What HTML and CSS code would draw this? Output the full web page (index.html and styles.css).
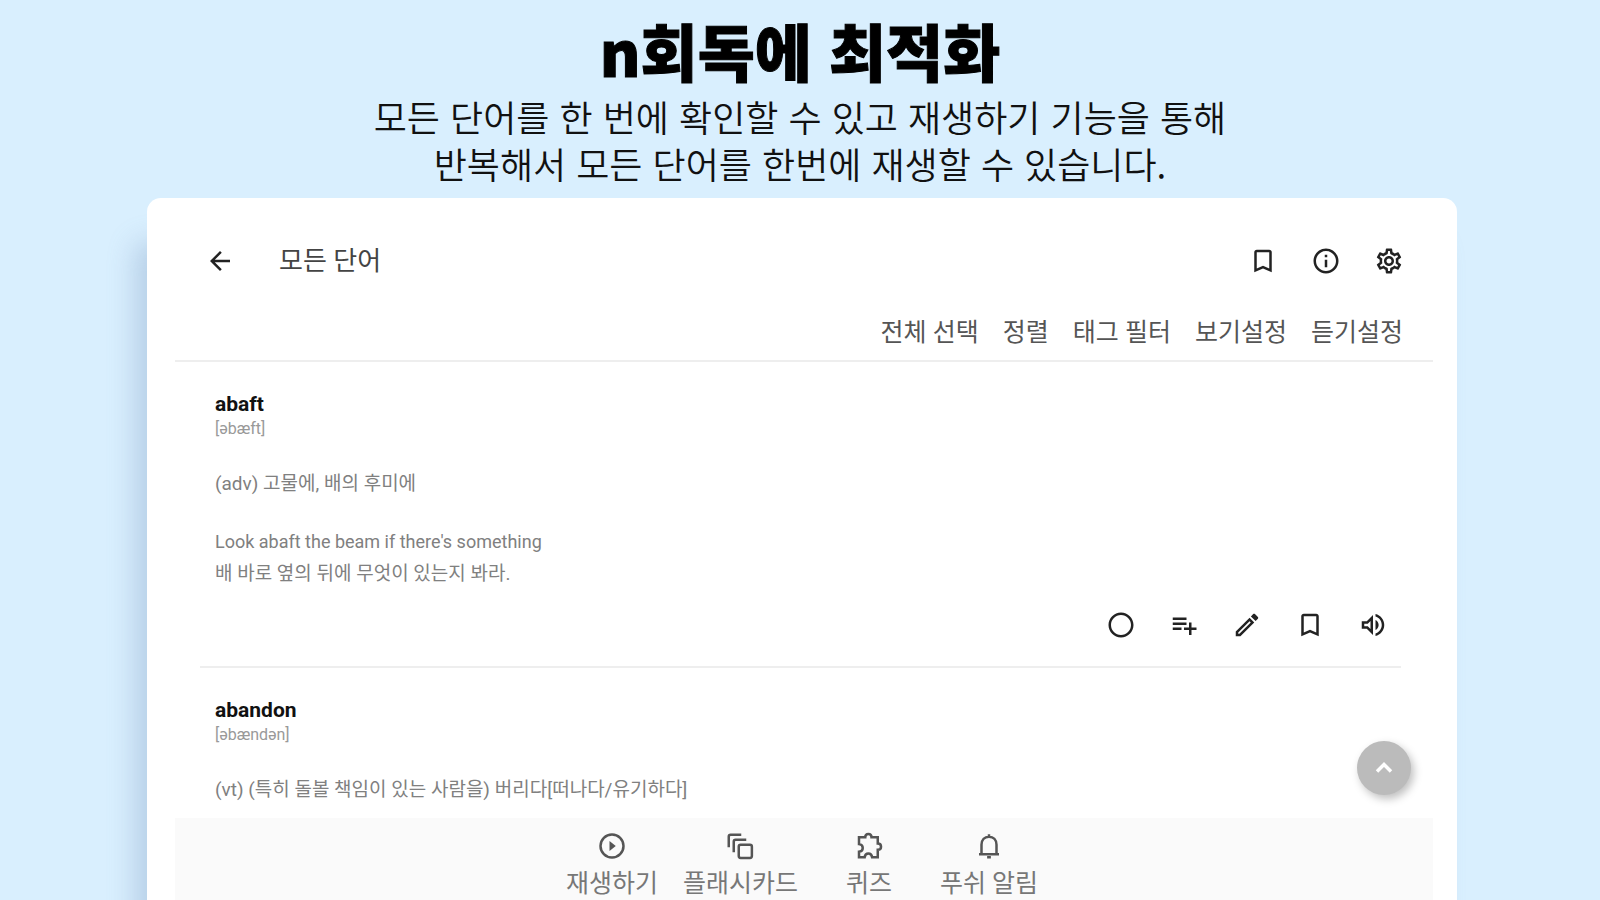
FILE: index.html
```html
<!DOCTYPE html>
<html lang="ko">
<head>
<meta charset="utf-8">
<meta name="viewport" content="width=device-width, initial-scale=1">
<title>n회독에 최적화</title>
<link rel="stylesheet" href="styles.css">
</head>
<body>
<svg class="sprite" aria-hidden="true">
  <symbol id="bookmark" viewBox="0 0 24 24"><path d="M17 3H7c-1.100 0-2 .9-2 2v16l7-3 7 3V5c0-1.100-.9-2-2-2zm0 15-5-2.180L7 18V5h10v13z"/></symbol>
</svg>
<header class="hero">
  <h1 class="hero-title">n회독에 최적화</h1>
  <p class="hero-text">모든 단어를 한 번에 확인할 수 있고 재생하기 기능을 통해<br>반복해서 모든 단어를 한번에 재생할 수 있습니다.</p>
</header>
<main class="card">
  <div class="appbar">
    <button class="icon-btn" aria-label="뒤로"><svg viewBox="0 0 24 24"><path d="M20 11H7.830l5.590-5.590L12 4l-8 8 8 8 1.410-1.410L7.830 13H20v-2z"/></svg></button>
    <h2 class="appbar-title">모든 단어</h2>
    <div class="icons">
      <button class="icon-btn" aria-label="북마크"><svg viewBox="0 0 24 24"><use href="#bookmark"/></svg></button>
      <button class="icon-btn" aria-label="정보"><svg viewBox="0 0 24 24"><path d="M11 7h2v2h-2zm0 4h2v6h-2zm1-9C6.480 2 2 6.480 2 12s4.480 10 10 10 10-4.480 10-10S17.520 2 12 2zm0 18c-4.410 0-8-3.590-8-8s3.590-8 8-8 8 3.590 8 8-3.590 8-8 8z"/></svg></button>
      <button class="icon-btn" aria-label="설정"><svg viewBox="0 0 24 24"><path d="M19.430 12.980c.04-.32.07-.64.07-.98s-.03-.66-.07-.98l2.110-1.650c.19-.15.24-.42.12-.64l-2-3.460c-.12-.22-.39-.3-.61-.22l-2.490 1c-.52-.4-1.080-.73-1.690-.98l-.38-2.650C14.460 2.180 14.250 2 14 2h-4c-.25 0-.46.18-.49.42l-.38 2.650c-.61.25-1.170.59-1.690.98l-2.490-1c-.23-.09-.49 0-.61.22l-2 3.460c-.13.22-.07.49.12.64l2.110 1.650c-.04.32-.07.65-.07.98s.03.66.07.98l-2.110 1.650c-.19.15-.24.42-.12.64l2 3.460c.12.22.39.3.61.22l2.490-1c.52.4 1.080.73 1.690.98l.38 2.650c.03.24.24.42.49.42h4c.25 0 .46-.18.49-.42l.38-2.650c.61-.25 1.170-.59 1.690-.98l2.490 1c.23.09.49 0 .61-.22l2-3.460c.12-.22.07-.49-.12-.64l-2.110-1.650zm-1.980-1.710c.04.31.05.52.05.73s-.02.43-.05.73l-.14 1.130.89.7 1.080.84-.7 1.210-1.270-.51-1.040-.42-.9.680c-.43.32-.84.56-1.250.73l-1.060.43-.16 1.130-.2 1.350h-1.400l-.19-1.350-.16-1.130-1.060-.43c-.43-.18-.83-.41-1.230-.71l-.91-.7-1.060.43-1.270.51-.7-1.210 1.080-.84.89-.7-.14-1.130c-.03-.31-.05-.54-.05-.74s.02-.43.05-.73l.14-1.130-.89-.7-1.080-.84.7-1.210 1.270.51 1.040.42.9-.68c.43-.32.84-.56 1.250-.73l1.060-.43.16-1.130.2-1.350h1.390l.19 1.350.16 1.130 1.060.43c.43.18.83.41 1.230.71l.91.7 1.060-.43 1.270-.51.7 1.210-1.070.85-.89.7.14 1.130zM12 8c-2.210 0-4 1.790-4 4s1.790 4 4 4 4-1.790 4-4-1.790-4-4-4zm0 6c-1.100 0-2-.9-2-2s.9-2 2-2 2 .9 2 2-.9 2-2 2z"/></svg></button>
    </div>
  </div>
  <div class="filters">
    <button class="filter">전체 선택</button>
    <button class="filter">정렬</button>
    <button class="filter">태그 필터</button>
    <button class="filter">보기설정</button>
    <button class="filter">듣기설정</button>
  </div>
  <div class="list">
    <article class="entry">
      <h3 class="word">abaft</h3>
      <p class="phonetic">[əbæft]</p>
      <p class="meaning">(adv) 고물에, 배의 후미에</p>
      <p class="example" lang="en">Look abaft the beam if there's something</p>
      <p>배 바로 옆의 뒤에 무엇이 있는지 봐라.</p>
      <div class="icons actions">
        <button class="icon-btn" aria-label="선택"><svg viewBox="0 0 24 24"><path d="M12 2C6.480 2 2 6.480 2 12s4.480 10 10 10 10-4.480 10-10S17.520 2 12 2zm0 18c-4.420 0-8-3.580-8-8s3.580-8 8-8 8 3.580 8 8-3.580 8-8 8z"/></svg></button>
        <button class="icon-btn" aria-label="목록에 추가"><svg viewBox="0 0 24 24"><path d="M14 10H3v2h11v-2zm0-4H3v2h11V6zm4 8v-4h-2v4h-4v2h4v4h2v-4h4v-2h-4zM3 16h7v-2H3v2z"/></svg></button>
        <button class="icon-btn" aria-label="편집"><svg viewBox="0 0 24 24"><path d="M14.060 9.020l.92.920L5.920 19H5v-.92l9.060-9.060M17.660 3c-.25 0-.51.1-.7.290l-1.830 1.830 3.750 3.750 1.830-1.830c.39-.39.39-1.020 0-1.410l-2.340-2.340c-.2-.2-.45-.29-.71-.29zm-3.600 3.190L3 17.250V21h3.750L17.810 9.940l-3.750-3.750z"/></svg></button>
        <button class="icon-btn" aria-label="북마크"><svg viewBox="0 0 24 24"><use href="#bookmark"/></svg></button>
        <button class="icon-btn" aria-label="발음 듣기"><svg viewBox="0 0 24 24"><path d="M3 9v6h4l5 5V4L7 9H3zm7-.17v6.340L7.830 13H5v-2h2.830L10 8.830zM16.500 12c0-1.770-1.020-3.290-2.500-4.030v8.050c1.480-.73 2.500-2.250 2.500-4.020zM14 3.230v2.060c2.890.86 5 3.540 5 6.710s-2.110 5.850-5 6.710v2.060c4.010-.91 7-4.490 7-8.770s-2.990-7.860-7-8.770z"/></svg></button>
      </div>
    </article>
    <article class="entry">
      <h3 class="word">abandon</h3>
      <p class="phonetic">[əbændən]</p>
      <p class="meaning">(vt) (특히 돌볼 책임이 있는 사람을) 버리다[떠나다/유기하다]</p>
    </article>
    <button class="to-top" aria-label="맨 위로"><svg viewBox="0 0 24 24"><path d="M6 15l6-6 6 6"/></svg></button>
  </div>
  <nav class="tabs">
    <a class="tab" href="#play"><svg viewBox="0 0 24 24"><circle cx="12" cy="12" r="9.200"/><path class="solid" d="M10 8l5 4-5 4z"/></svg>재생하기</a>
    <a class="tab" href="#cards"><svg viewBox="0 0 24 24"><rect x="11" y="11" width="10.500" height="10.500" rx="1.500"/><path d="M7 17V8.500Q7 7 8.500 7H17M3 13V4.500Q3 3 4.500 3H13"/></svg>플래시카드</a>
    <a class="tab" href="#quiz"><svg viewBox="0 0 24 24"><path d="M4 5h5c0-3.500 5-3.500 5 0h5v5c3.500 0 3.500 5 0 5v6h-4.500c-.5-4-5.500-4-6 0H4v-4.500c4-.5 4-5.500 0-6z"/></svg>퀴즈</a>
    <a class="tab" href="#push"><svg viewBox="0 0 24 24"><path d="M4 18.500h16M6 18v-7c0-4 2.500-6.500 6-6.500s6 2.500 6 6.500v7M12 2.500v2M10.500 21h3"/></svg>푸쉬 알림</a>
  </nav>
</main>
</body>
</html>
```

FILE: styles.css
```css
* { box-sizing: border-box; }
body {
  margin: 0;
  height: 100vh;
  display: flex;
  flex-direction: column;
  overflow: hidden;
  background: #d9effe;
  color: #000;
  font-family: Roboto, "Noto Sans CJK KR", sans-serif;
}
h1, h2, h3, p { margin: 0; }
button { border: 0; padding: 0; background: none; color: inherit; font: inherit; }
.sprite { position: absolute; width: 0; height: 0; }

.hero {
  padding: 12px 0 11px;
  text-align: center;
  font-family: "Noto Sans CJK KR", sans-serif;
}
.hero-title {
  margin-bottom: 5px;
  font-size: 62px;
  line-height: 76px;
  font-weight: 900;
  -webkit-text-stroke: 1px #000;
}
.hero-text { font-size: 36px; line-height: 47px; font-weight: 350; color: #111; }

.card {
  flex: 1;
  min-height: 0;
  margin: 0 143px 0 147px;
  padding: 0 24px 0 28px;
  display: flex;
  flex-direction: column;
  background: #fff;
  border-radius: 14px 14px 0 0;
  box-shadow: -16px 40px 28px -4px rgba(110, 140, 185, 0.32);
}
.appbar {
  display: flex;
  align-items: center;
  height: 124px;
  padding: 2px 29px 0 30px;
}
.appbar-title {
  margin-left: 44px;
  color: #444;
  font-size: 26px;
  line-height: 40px;
  font-weight: 400;
}
.icon-btn { display: block; width: 30px; height: 30px; }
.icon-btn svg { display: block; width: 100%; height: 100%; fill: #222; }
.icons { display: flex; gap: 33px; margin-left: auto; }

.filters {
  display: flex;
  justify-content: flex-end;
  gap: 24px;
  height: 40px;
  padding: 1px 30px 0;
  border-bottom: 2px solid #eee;
}
.filter { height: 20px; color: #555; font-size: 25px; line-height: 20px; }

.list {
  position: relative;
  flex: 1;
  min-height: 0;
  overflow: hidden;
  padding: 0 32px 0 25px;
}
.entry {
  padding: 28px 13px 26px 15px;
  border-bottom: 2px solid #eee;
  color: #808080;
  font-size: 19px;
  line-height: 32px;
}
.word { color: #111; font-size: 21px; line-height: 28px; font-weight: 700; }
.phonetic { color: #999; font-size: 16px; line-height: 22px; }
.meaning { margin-top: 28px; }
.example { margin-top: 26px; font-size: 18px; }
.actions { justify-content: flex-end; margin-top: 20px; }

.to-top {
  position: absolute;
  right: 22px;
  bottom: 23px;
  width: 54px;
  height: 54px;
  display: grid;
  place-items: center;
  border-radius: 50%;
  background: #bbb;
  box-shadow: 3px 4px 8px rgba(0, 0, 0, 0.25);
}
.to-top svg { width: 28px; fill: none; stroke: #fff; stroke-width: 3; }

.tabs {
  display: flex;
  justify-content: center;
  gap: 25px;
  height: 82px;
  padding: 13px 4px 0 0;
  background: #fafafa;
}
.tab {
  display: flex;
  flex-direction: column;
  align-items: center;
  gap: 3px;
  min-width: 92px;
  color: #777;
  font-size: 25px;
  line-height: 40px;
  text-decoration: none;
}
.tab svg { flex: none; width: 30px; height: 30px; fill: none; stroke: #555; stroke-width: 2; }
.tab .solid { fill: #555; stroke: none; }
```
